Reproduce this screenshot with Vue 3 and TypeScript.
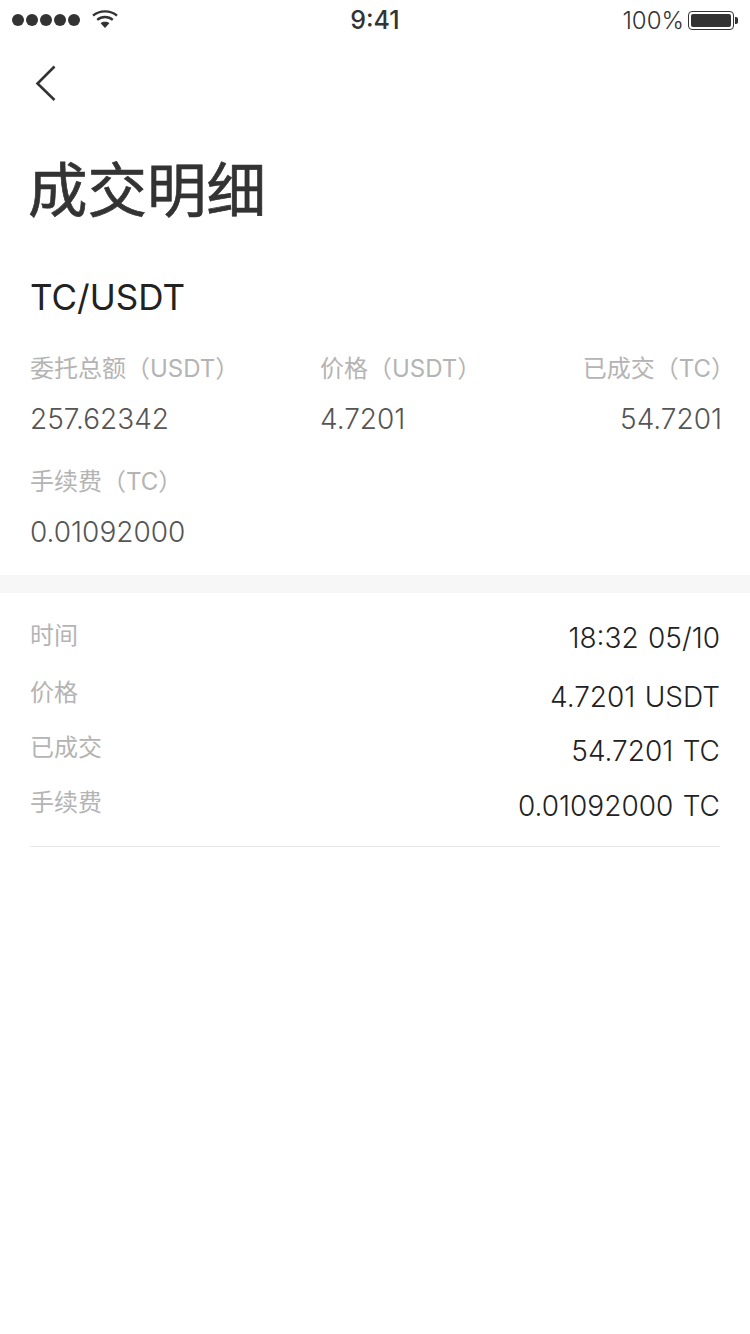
<template>
  <div class="page">
    <div class="status-bar">
      <div class="status-left">
        <div class="signal">
          <span v-for="n in 5" :key="n" class="dot"></span>
        </div>
        <svg class="wifi" width="26" height="20" viewBox="0 0 26 20">
          <path d="M1 6.6C7.6 .9 18.4 .9 25 6.6" fill="none" stroke="#333" stroke-width="2.4" />
          <path d="M5.2 10.8C9.6 7 16.4 7 20.8 10.8" fill="none" stroke="#333" stroke-width="2.4" />
          <path d="M8.6 14.2C11 12.3 15 12.3 17.4 14.2L13 19Z" fill="#333" />
        </svg>
      </div>
      <span class="clock">9:41</span>
      <div class="status-right">
        <span class="percent">100%</span>
        <span class="battery"><span class="battery-fill"></span></span>
        <span class="battery-cap"></span>
      </div>
    </div>

    <div class="nav">
      <svg width="24" height="38" viewBox="0 0 24 38">
        <path d="M20.5 2.5 3.5 19.5 20.5 36" fill="none" stroke="#333" stroke-width="2.6" />
      </svg>
    </div>

    <h1 class="title">成交明细</h1>

    <section class="summary">
      <h2 class="pair">TC/USDT</h2>
      <div class="grid">
        <div v-for="item in summary" :key="item.label" class="cell" :class="item.align">
          <div class="cell-label">{{ item.label }}</div>
          <div class="cell-value">{{ item.value }}</div>
        </div>
      </div>
    </section>

    <div class="band"></div>

    <section class="details">
      <div v-for="row in rows" :key="row.label" class="row" :class="row.cls">
        <span class="row-label">{{ row.label }}</span>
        <span class="row-value">{{ row.value }}</span>
      </div>
    </section>
  </div>
</template>

<script setup lang="ts">
interface SummaryItem {
  label: string
  value: string
  align?: string
}

interface DetailRow {
  label: string
  value: string
  cls: string
}

const summary: SummaryItem[] = [
  { label: '委托总额（USDT）', value: '257.62342' },
  { label: '价格（USDT）', value: '4.7201' },
  { label: '已成交（TC）', value: '54.7201', align: 'right' },
  { label: '手续费（TC）', value: '0.01092000' },
]

const rows: DetailRow[] = [
  { label: '时间', value: '18:32 05/10', cls: 'first' },
  { label: '价格', value: '4.7201 USDT', cls: 'second' },
  { label: '已成交', value: '54.7201 TC', cls: '' },
  { label: '手续费', value: '0.01092000 TC', cls: '' },
]
</script>

<style>
html,
body {
  margin: 0;
  background: #fff;
}
</style>

<style scoped>
.page {
  width: 750px;
  min-height: 1334px;
  background: #fff;
  font-family: 'Inter', 'Noto Sans CJK SC', sans-serif;
  overflow: hidden;
}
.status-bar {
  height: 40px;
  display: grid;
  grid-template-columns: 1fr auto 1fr;
  align-items: center;
  padding: 0 12px;
  color: #333;
}
.status-left {
  display: flex;
  align-items: center;
  gap: 12px;
}
.signal {
  display: flex;
  gap: 2px;
}
.dot {
  width: 12px;
  height: 12px;
  border-radius: 50%;
  background: #333;
}
.wifi {
  margin-top: -2px;
}
.clock {
  font-size: 25px;
  font-weight: 500;
}
.status-right {
  display: flex;
  align-items: center;
  justify-content: flex-end;
}
.percent {
  font-size: 24px;
  font-weight: 300;
  margin-right: 4px;
}
.battery {
  width: 46px;
  height: 19px;
  box-sizing: border-box;
  border: 1.5px solid #333;
  border-radius: 4px;
  padding: 2px;
  display: flex;
}
.battery-fill {
  flex: 1;
  background: #333;
  border-radius: 2px;
}
.battery-cap {
  width: 3px;
  height: 7px;
  margin-left: 1px;
  background: #333;
  border-radius: 0 2px 2px 0;
}
.nav {
  height: 64px;
  padding: 24px 0 0 34px;
  box-sizing: border-box;
  display: flex;
}
.title {
  margin: 50px 0 0 28px;
  font-size: 59.5px;
  line-height: 72px;
  font-weight: 400;
  -webkit-text-stroke: 0.7px #333;
  color: #333;
}
.summary {
  padding: 0 28px 0 30px;
}
.pair {
  margin: 49px 0 0;
  font-size: 35px;
  line-height: 44px;
  font-weight: 400;
  color: #222;
}
.grid {
  display: grid;
  grid-template-columns: 290px 1fr auto;
  margin-top: 33px;
  row-gap: 29px;
}
.cell.right {
  text-align: right;
}
.cell.right .cell-label {
  margin-right: -13px;
}
.cell-label {
  font-size: 24px;
  line-height: 34px;
  color: #b4b4b4;
  font-weight: 400;
}
.cell-value {
  margin-top: 16px;
  font-size: 28px;
  line-height: 34px;
  color: #555;
  font-weight: 300;
}
.band {
  margin-top: 26px;
  height: 18px;
  background: #f7f7f7;
}
.details {
  margin: 0 30px;
  padding: 27px 0 4px;
  border-bottom: 1px solid #e8e8e8;
}
.row {
  display: flex;
  justify-content: space-between;
  align-items: flex-start;
  height: 55px;
}
.row.first {
  height: 57px;
}
.row.first .row-value {
  margin-top: -1px;
}
.row.second .row-value {
  margin-top: 1px;
}
.row-label {
  font-size: 24px;
  line-height: 32px;
  color: #b4b4b4;
  font-weight: 400;
}
.row-value {
  font-size: 28px;
  line-height: 38px;
  color: #222;
  font-weight: 300;
  word-spacing: 1.5px;
}
</style>
